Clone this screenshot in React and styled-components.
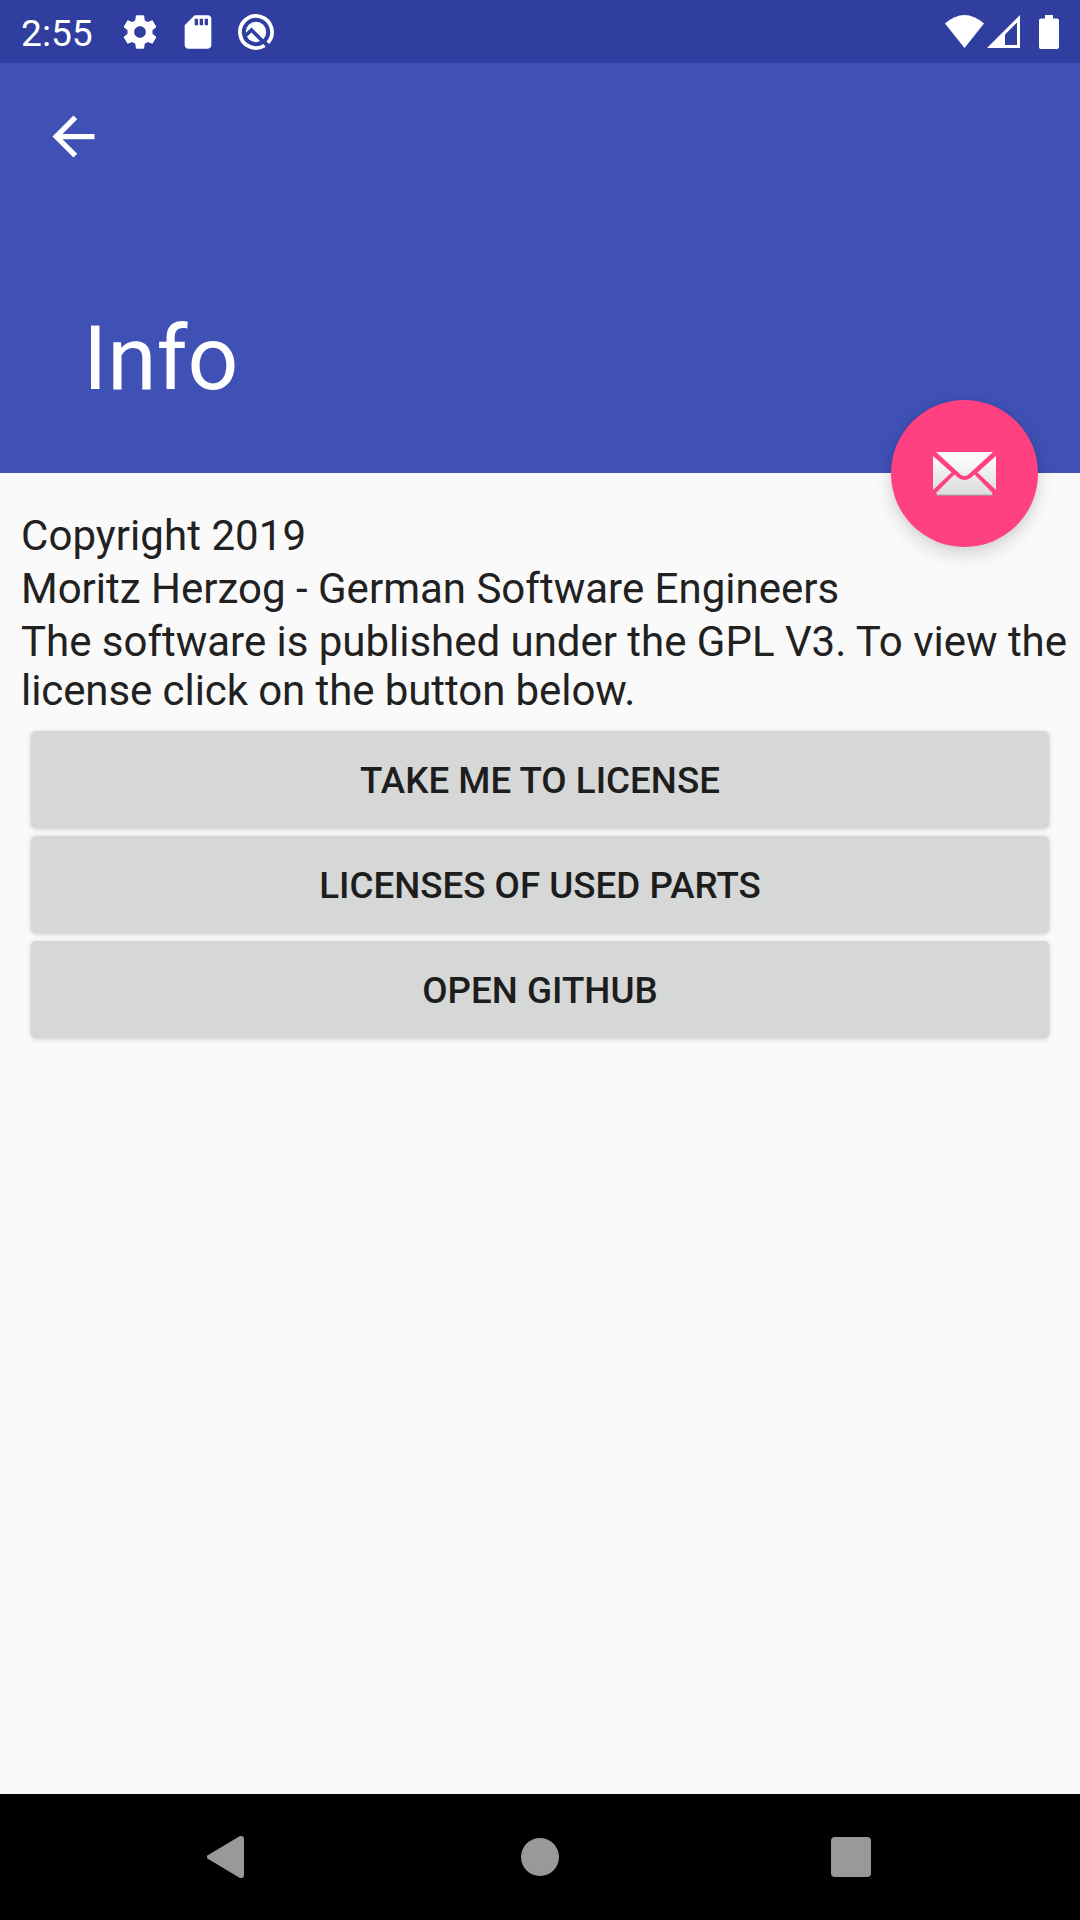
import React from "react";
import styled, { createGlobalStyle } from "styled-components";

const GlobalStyle = createGlobalStyle`
  * { box-sizing: border-box; }
  body { margin: 0; background: #fafafa; }
`;

const Screen = styled.div`
  display: flex;
  flex-direction: column;
  width: 1080px;
  height: 1920px;
  background: #fafafa;
  color: #212121;
  font-family: Roboto, "Liberation Sans", sans-serif;
  overflow: hidden;
`;

const StatusBar = styled.header`
  display: flex;
  justify-content: space-between;
  height: 63px;
  padding: 0 21px;
  background: #303f9f;
  color: #fff;
`;

const StatusGroup = styled.div`
  display: flex;
  align-items: center;
`;

const Clock = styled.span`
  width: 99px;
  padding-top: 3px;
  font-size: 37.2px;
  line-height: 44px;
`;

const Icon = styled.svg`
  display: block;
  flex: none;
  width: ${(p) => p.$w}px;
  height: ${(p) => p.$h || p.$w}px;
  margin-left: ${(p) => p.$gap || 0}px;
  fill: currentColor;
`;

const AppBar = styled.section`
  position: relative;
  display: flex;
  flex-direction: column;
  justify-content: space-between;
  height: 410px;
  padding: 42px 42px 62px 83px;
  background: #3f51b5;
  color: #fff;
`;

const BackButton = styled.button`
  align-self: flex-start;
  margin-left: -41px;
  padding: 0;
  border: 0;
  background: none;
  color: inherit;
`;

const Title = styled.h1`
  margin: 0;
  font-size: 89.25px;
  font-weight: 400;
  line-height: 104px;
`;

const Fab = styled.button`
  position: absolute;
  right: 42px;
  bottom: -74px;
  display: flex;
  align-items: center;
  justify-content: center;
  width: 147px;
  height: 147px;
  padding: 0;
  border: 0;
  border-radius: 50%;
  background: #ff4081;
  box-shadow: 0 8px 18px rgba(0, 0, 0, 0.14), 0 0 8px rgba(0, 0, 0, 0.06);
`;

const Content = styled.main`
  display: flex;
  flex: 1;
  flex-direction: column;
  padding: 38px 0 0 21px;
`;

const Line = styled.p`
  margin: 0 0 4px;
  font-size: 42px;
  line-height: 49px;
  white-space: nowrap;
`;

const Sentence = styled.span`
  display: block;
  letter-spacing: ${(p) => p.$tracking}px;
`;

const Actions = styled.div`
  display: flex;
  flex-direction: column;
  gap: 8px;
  padding: 12px 31px 0 10px;
`;

const ActionButton = styled.button`
  height: 97px;
  padding: 2px 0 0;
  border: 0;
  border-radius: 5px;
  background: #d6d7d7;
  color: #1d1d1d;
  font-family: inherit;
  font-size: 36.75px;
  font-weight: 500;
  line-height: 43px;
  text-transform: uppercase;
  box-shadow: 0 1px 5px rgba(0, 0, 0, 0.2);
`;

const NavBar = styled.nav`
  display: flex;
  align-items: center;
  justify-content: space-between;
  height: 126px;
  padding: 0 209px 0 206px;
  background: #000;
  color: #999;
`;

const actions = ["Take me to license", "Licenses of used parts", "Open GitHub"];

function Envelope() {
  return (
    <Icon $w={64} $h={46} viewBox="0.5 0 64 46">
      <defs>
        <linearGradient id="paper" gradientUnits="userSpaceOnUse" x1="0" y1="0" x2="0" y2="46">
          <stop offset="0.2" stopColor="#fafafa" />
          <stop offset="1" stopColor="#d9d9d9" />
        </linearGradient>
      </defs>
      <g fill="url(#paper)">
        <path d="M3.500 1H60.500L36 23.500Q32 26.500 28 23.500Z" />
        <path d="M.5 5L19 21.500L.5 39Z" />
        <path d="M63.500 5L45 21.500L63.500 39Z" />
        <path d="M22 23.500L26 27Q32 31 38 27L42 23.500L60 42L59 44H5L3.500 42Z" />
      </g>
      <path d="M4 44.200H60" stroke="#a0a0a0" strokeWidth="1" />
    </Icon>
  );
}

export default function App() {
  return (
    <Screen>
      <GlobalStyle />
      <StatusBar>
        <StatusGroup>
          <Clock>2:55</Clock>
          <Icon $w={40} viewBox="0 0 24 24">
            <path d="M19.430 12.980c.04-.32.07-.64.07-.98s-.03-.66-.07-.98l2.110-1.650c.19-.15.24-.42.12-.64l-2-3.460c-.12-.22-.39-.3-.61-.22l-2.490 1c-.52-.4-1.080-.73-1.690-.98l-.38-2.650C14.460 2.180 14.250 2 14 2h-4c-.25 0-.46.18-.49.42l-.38 2.650c-.61.25-1.170.59-1.690.98l-2.490-1c-.23-.09-.49 0-.61.22l-2 3.460c-.13.22-.07.49.12.64l2.110 1.650c-.04.32-.07.65-.07.98s.03.66.07.98l-2.110 1.650c-.19.15-.24.42-.12.64l2 3.460c.12.22.39.3.61.22l2.490-1c.52.4 1.080.73 1.690.98l.38 2.650c.03.24.24.42.49.42h4c.25 0 .46-.18.49-.42l.38-2.650c.61-.25 1.170-.59 1.690-.98l2.490 1c.23.09.49 0 .61-.22l2-3.460c.12-.22.07-.49-.12-.64l-2.110-1.650zM12 15.500c-1.930 0-3.500-1.570-3.500-3.500s1.570-3.500 3.500-3.500 3.500 1.570 3.500 3.500-1.570 3.500-3.500 3.500z" />
          </Icon>
          <Icon $w={40} $gap={18} viewBox="0 0 24 24">
            <path d="M18 2h-8L4.020 8 4 20c0 1.100.9 2 2 2h12c1.100 0 2-.9 2-2V4c0-1.100-.9-2-2-2zm-6 6h-2V4h2v4zm3 0h-2V4h2v4zm3 0h-2V4h2v4z" />
          </Icon>
          <Icon $w={40} $gap={18} viewBox="0 0 40 40">
            <circle cx="20" cy="20" r="10.2" />
            <path d="M8 25L15.500 18L31 33.500" fill="none" stroke="#303f9f" strokeWidth="3.6" />
            <path d="M28.600 33.500A16 16 0 1 1 31.800 30.800" fill="none" stroke="currentColor" strokeWidth="3.8" />
          </Icon>
        </StatusGroup>
        <StatusGroup>
          <Icon $w={39} $h={33} viewBox="0 0 39 33">
            <path d="M0 8.500Q19.500-8.500 39 8.500L19.500 33Z" />
          </Icon>
          <Icon $w={33} $h={33} $gap={3} viewBox="0 0 33 33">
            <path fillRule="evenodd" d="M33 0V33H0ZM30 7.500L18 19.500V30H30Z" />
          </Icon>
          <Icon $w={20} $h={34} $gap={19} viewBox="0 0 20 34">
            <path d="M6 0H14V3.500H18Q20 3.500 20 5.500V32Q20 34 18 34H2Q0 34 0 32V5.500Q0 3.500 2 3.500H6Z" />
          </Icon>
        </StatusGroup>
      </StatusBar>
      <AppBar>
        <BackButton aria-label="Back">
          <Icon $w={63} viewBox="0 0 24 24">
            <path d="M20 11H7.830l5.590-5.590L12 4l-8 8 8 8 1.410-1.410L7.830 13H20v-2z" />
          </Icon>
        </BackButton>
        <Title>Info</Title>
        <Fab aria-label="Send mail">
          <Envelope />
        </Fab>
      </AppBar>
      <Content>
        <Line>
          <Sentence $tracking={0.06}>Copyright 2019</Sentence>
        </Line>
        <Line>Moritz Herzog - German Software Engineers</Line>
        <Line>
          <Sentence $tracking={-0.02}>The software is published under the GPL V3. To view the</Sentence>
          <Sentence $tracking={-0.08}>license click on the button below.</Sentence>
        </Line>
        <Actions>
          {actions.map((label) => (
            <ActionButton key={label}>{label}</ActionButton>
          ))}
        </Actions>
      </Content>
      <NavBar>
        <Icon $w={38} $h={42} viewBox="0 0 38 42">
          <path d="M1.800 19.200L33.500.3Q38-.8 38 3V39Q38 42.800 33.500 41.700L1.800 22.800Q0 21 1.800 19.200Z" />
        </Icon>
        <Icon $w={38} $gap={4} viewBox="0 0 38 38">
          <circle cx="19" cy="19" r="19" />
        </Icon>
        <Icon $w={40} viewBox="0 0 40 40">
          <rect width="40" height="40" rx="4" />
        </Icon>
      </NavBar>
    </Screen>
  );
}
